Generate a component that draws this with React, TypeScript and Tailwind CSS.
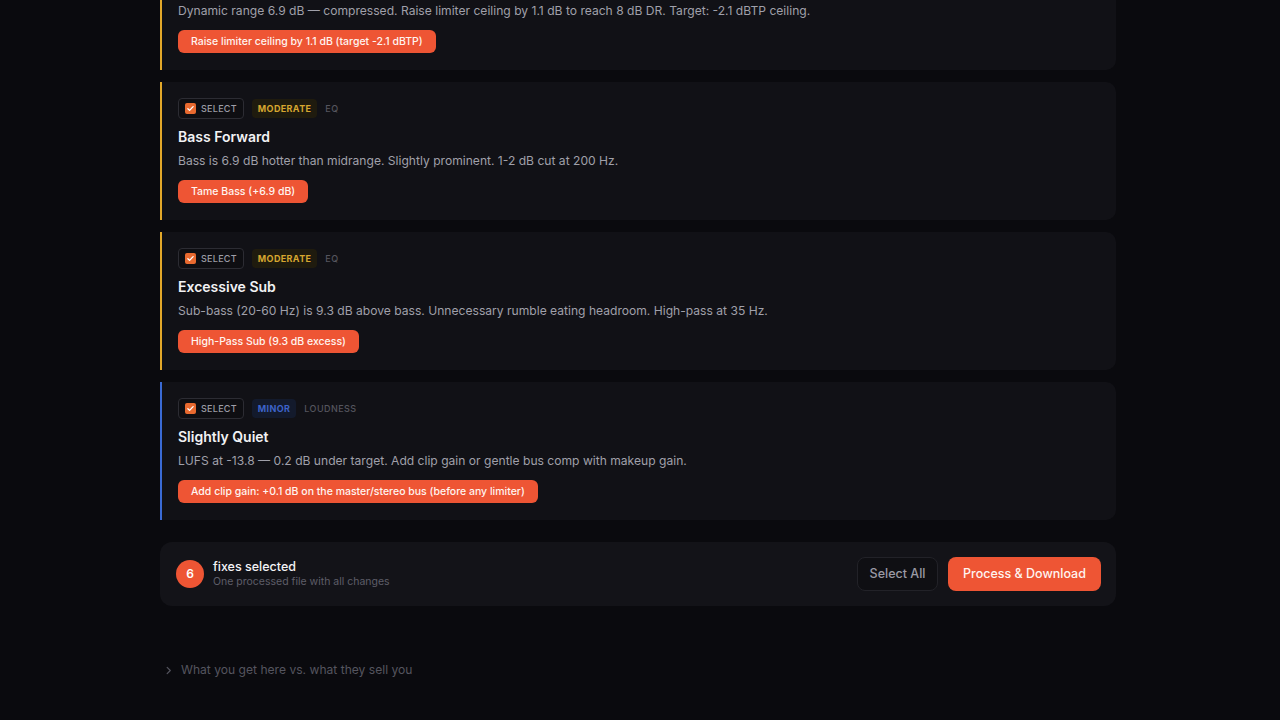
import React from "react";

type Fix = {
  severity: "MODERATE" | "MINOR";
  category: string;
  title: string;
  description: string;
  action: string;
};

const fixes: Fix[] = [
  {
    severity: "MODERATE",
    category: "DYNAMICS",
    title: "Over-Compressed",
    description:
      "Dynamic range 6.9 dB — compressed. Raise limiter ceiling by 1.1 dB to reach 8 dB DR. Target: -2.1 dBTP ceiling.",
    action: "Raise limiter ceiling by 1.1 dB (target -2.1 dBTP)",
  },
  {
    severity: "MODERATE",
    category: "EQ",
    title: "Bass Forward",
    description: "Bass is 6.9 dB hotter than midrange. Slightly prominent. 1-2 dB cut at 200 Hz.",
    action: "Tame Bass (+6.9 dB)",
  },
  {
    severity: "MODERATE",
    category: "EQ",
    title: "Excessive Sub",
    description: "Sub-bass (20-60 Hz) is 9.3 dB above bass. Unnecessary rumble eating headroom. High-pass at 35 Hz.",
    action: "High-Pass Sub (9.3 dB excess)",
  },
  {
    severity: "MINOR",
    category: "LOUDNESS",
    title: "Slightly Quiet",
    description: "LUFS at -13.8 — 0.2 dB under target. Add clip gain or gentle bus comp with makeup gain.",
    action: "Add clip gain: +0.1 dB on the master/stereo bus (before any limiter)",
  },
];

function CheckBox() {
  return (
    <span className="flex h-[11px] w-[11px] items-center justify-center rounded-[2px] bg-[#e8692f]">
      <svg width="9" height="9" viewBox="0 0 12 12" fill="none">
        <path d="M2.5 6.2l2.3 2.3 4.7-5" stroke="#fff" strokeWidth="1.8" strokeLinecap="round" strokeLinejoin="round" />
      </svg>
    </span>
  );
}

function FixCard({ fix }: { fix: Fix }) {
  const moderate = fix.severity === "MODERATE";
  return (
    <div
      className={`rounded-r-[10px] border-l-2 bg-[#111116] pl-[16px] pr-6 pt-4 pb-[17px] ${
        moderate ? "border-[#e2a82a]" : "border-[#3a6ad4]"
      }`}
    >
      <div className="flex items-center gap-2">
        <span className="flex h-[21px] items-center gap-[5px] rounded-[4px] border border-[#2c2c33] bg-[#0e0e12] px-[6px] text-[9px] font-medium tracking-[0.03em] text-[#9c9ca6]">
          <CheckBox />
          SELECT
        </span>
        <span
          className={`flex h-[19px] items-center rounded-[4px] px-[6px] text-[9px] font-bold tracking-[0.04em] ${
            moderate ? "bg-[#1f1b0e] text-[#d6a630]" : "bg-[#131a2c] text-[#3d63c9]"
          }`}
        >
          {fix.severity}
        </span>
        <span className="text-[9px] font-medium tracking-[0.05em] text-[#55555e]">{fix.category}</span>
      </div>
      <div className="mt-[9px] text-[14px] font-semibold leading-[18px] text-[#f2f2f4]">{fix.title}</div>
      <p className="mt-[6px] text-[12.1px] leading-[17px] text-[#a0a0aa]">{fix.description}</p>
      <button className="mt-[11px] h-[23px] rounded-[6px] bg-[#ee5534] px-[13px] text-[10.5px] font-medium text-[#fff4f0]">
        {fix.action}
      </button>
    </div>
  );
}

export default function App() {
  return (
    <div
      className="h-[720px] overflow-hidden bg-[#0a0a0e]"
      style={{ fontFamily: "Inter, 'Noto Sans', sans-serif" }}
    >
      <div className="mx-auto w-[956px] -translate-x-[2px]">
        <div className="-mt-[68px] flex flex-col gap-3">
          {fixes.map((f, i) => (
            <FixCard key={i} fix={f} />
          ))}
        </div>

        <div className="mt-[22px] flex h-[64px] items-center justify-between rounded-[12px] bg-[#131318] pl-4 pr-[15px]">
          <div className="flex items-center gap-[9px]">
            <span className="flex h-[28px] w-[28px] items-center justify-center rounded-full bg-[#ee5534] text-[12px] font-semibold text-white">
              6
            </span>
            <div className="flex flex-col">
              <span className="text-[12.5px] font-medium leading-[16px] text-[#f2f2f4]">fixes selected</span>
              <span className="text-[10.5px] leading-[14px] text-[#5e5e68]">One processed file with all changes</span>
            </div>
          </div>
          <div className="flex items-center gap-[10px]">
            <button className="h-[34px] w-[81px] rounded-[8px] border border-[#222228] bg-[#0f0f13] text-[12.5px] font-medium text-[#9a9aa4]">
              Select All
            </button>
            <button className="h-[34px] w-[153px] rounded-[8px] bg-[#ee5534] text-[12.5px] font-medium text-[#fff4f0]">
              Process &amp; Download
            </button>
          </div>
        </div>

        <div className="mt-[55px] flex items-center gap-[8px] pl-[4px] text-[12.1px] text-[#55555f]">
          <svg width="9" height="9" viewBox="0 0 10 10" fill="none">
            <path d="M3.5 1.5L7 5l-3.5 3.5" stroke="#55555f" strokeWidth="1.3" strokeLinecap="round" strokeLinejoin="round" />
          </svg>
          What you get here vs. what they sell you
        </div>
      </div>
    </div>
  );
}
